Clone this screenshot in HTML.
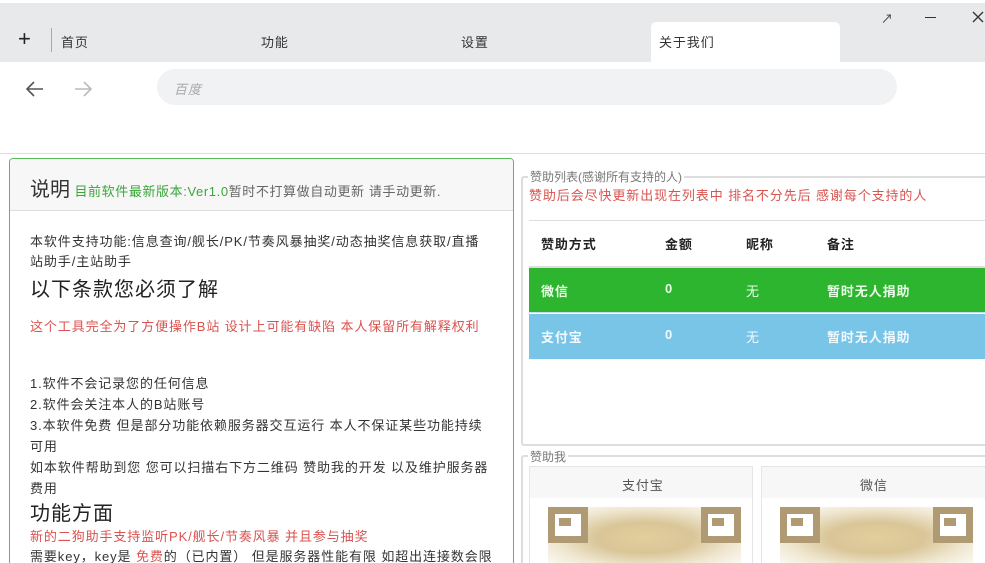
<!DOCTYPE html>
<html><head><meta charset="utf-8"><style>
*{margin:0;padding:0;box-sizing:border-box}
html{width:985px;height:563px;overflow:hidden}
body{width:985px;height:563px;overflow:hidden;background:#fff;font-family:"Liberation Sans","Noto Sans CJK SC",sans-serif;color:#333;position:relative}
.a{position:absolute;white-space:nowrap}
.f13{font-size:13px;letter-spacing:0.9px}
.fp{position:absolute;width:40px;height:36px;border:7px solid #b09a74;background:#fff}
.fp div{margin:4px;width:12px;height:8px;background:#b09a74}
.qr{position:absolute;width:193px;height:56px;background:radial-gradient(ellipse at 50% 55%,#e3cf9c 0%,#d9c597 35%,#efe6cf 65%,#fff 100%)}
</style></head><body>
<div class="a" style="left:0;top:3px;width:985px;height:59px;background:#e8e9eb"></div>
<div class="a" style="left:651px;top:22px;width:189px;height:41px;background:#fff;border-radius:5px 5px 0 0"></div>
<div class="a" style="left:18px;top:28px;font-size:22px;color:#222;line-height:22px">+</div>
<div class="a" style="left:51px;top:28px;width:1px;height:24px;background:#aaa"></div>
<div class="a f13" style="left:61px;top:32px;color:#333">首页</div>
<div class="a f13" style="left:261px;top:32px">功能</div>
<div class="a f13" style="left:461px;top:32px">设置</div>
<div class="a f13" style="left:659px;top:32px">关于我们</div>
<div class="a" style="left:881px;top:10px;font-size:12px;color:#333">↗</div>
<div class="a" style="left:925px;top:17px;width:11px;height:1px;background:#333"></div>
<svg class="a" style="left:972px;top:11px" width="12" height="12"><path d="M1 1L11 11M11 1L1 11" stroke="#333" stroke-width="1.3"/></svg>
<svg class="a" style="left:25px;top:80px" width="20" height="18"><path d="M18 9H3M9 2L2 9l7 7" stroke="#555" stroke-width="1.6" fill="none"/></svg>
<svg class="a" style="left:73px;top:80px" width="20" height="18"><path d="M2 9h15M11 2l7 7-7 7" stroke="#bbb" stroke-width="1.6" fill="none"/></svg>
<div class="a" style="left:157px;top:69px;width:740px;height:36px;background:#f1f2f4;border-radius:18px"></div>
<div class="a f13" style="left:174px;top:79px;color:#aaa;font-style:italic">百度</div>
<div class="a" style="left:0;top:153px;width:985px;height:1px;background:#ddd"></div>

<div class="a" style="left:9px;top:158px;width:505px;height:410px;border:1px solid #5cb85c;border-radius:4px;overflow:hidden">
<div style="height:52px;background:#f7f7f7;border-bottom:1px solid #ddd;padding:14px 0 0 20px;white-space:nowrap"><span style="font-size:20px;color:#333">说明</span> <span class="f13" style="color:#3aa63a;letter-spacing:0.6px">目前软件最新版本:Ver1.0</span><span class="f13" style="color:#666;letter-spacing:0.6px">暂时不打算做自动更新 请手动更新.</span></div>
</div>
<div class="a f13" style="left:30px;top:232px;line-height:20px">本软件支持功能:信息查询/舰长/PK/节奏风暴抽奖/动态抽奖信息获取/直播<br>站助手/主站助手</div>
<div class="a" style="left:30px;top:273px;font-size:20px;color:#222;letter-spacing:1px">以下条款您必须了解</div>
<div class="a f13" style="left:30px;top:316px;color:#d9534f">这个工具完全为了方便操作B站 设计上可能有缺陷 本人保留所有解释权利</div>
<div class="a f13" style="left:30px;top:373px;line-height:21px">1.软件不会记录您的任何信息<br>2.软件会关注本人的B站账号<br>3.本软件免费 但是部分功能依赖服务器交互运行 本人不保证某些功能持续<br>可用<br>如本软件帮助到您 您可以扫描右下方二维码 赞助我的开发 以及维护服务器<br>费用</div>
<div class="a" style="left:30px;top:497px;font-size:20px;color:#222;letter-spacing:1px">功能方面</div>
<div class="a f13" style="left:30px;top:526px;color:#d9534f">新的二狗助手支持监听PK/舰长/节奏风暴 并且参与抽奖</div>
<div class="a f13" style="left:30px;top:546px">需要key，key是 <span style="color:#d9534f">免费</span>的（已内置） 但是服务器性能有限 如超出连接数会限</div>

<div class="a" style="left:521px;top:176px;width:470px;height:270px;border:2px solid #ddd;border-radius:3px"></div>
<div class="a" style="left:528px;top:168px;background:#fff;font-size:12px;color:#777;padding:0 2px">赞助列表(感谢所有支持的人)</div>
<div class="a f13" style="left:529px;top:185px;color:#d9534f">赞助后会尽快更新出现在列表中 排名不分先后 感谢每个支持的人</div>
<div class="a" style="left:529px;top:220px;width:456px;height:1px;background:#ddd"></div>
<div class="a" style="left:529px;top:266px;width:456px;height:2px;background:#ddd"></div>
<div class="a f13" style="left:541px;top:234px;font-weight:bold;color:#222">赞助方式</div>
<div class="a f13" style="left:665px;top:234px;font-weight:bold;color:#222">金额</div>
<div class="a f13" style="left:746px;top:234px;font-weight:bold;color:#222">昵称</div>
<div class="a f13" style="left:827px;top:234px;font-weight:bold;color:#222">备注</div>
<div class="a" style="left:529px;top:268px;width:456px;height:45px;background:#2db52f;border-bottom:1px solid #cde"></div>
<div class="a" style="left:529px;top:314px;width:456px;height:45px;background:#79c5e8"></div>
<div class="a f13" style="left:541px;top:281px;color:#e8ffe8;font-weight:bold">微信</div>
<div class="a f13" style="left:665px;top:281px;color:#e8ffe8;font-weight:bold">0</div>
<div class="a f13" style="left:746px;top:281px;color:#e8ffe8">无</div>
<div class="a f13" style="left:827px;top:281px;color:#e8ffe8;font-weight:bold">暂时无人捐助</div>
<div class="a f13" style="left:541px;top:327px;color:#f0faff;font-weight:bold">支付宝</div>
<div class="a f13" style="left:665px;top:327px;color:#f0faff;font-weight:bold">0</div>
<div class="a f13" style="left:746px;top:327px;color:#f0faff">无</div>
<div class="a f13" style="left:827px;top:327px;color:#f0faff;font-weight:bold">暂时无人捐助</div>

<div class="a" style="left:521px;top:455px;width:470px;height:115px;border:2px solid #ddd;border-radius:3px"></div>
<div class="a" style="left:528px;top:448px;background:#fff;font-size:12px;color:#777;padding:0 2px">赞助我</div>

<div class="a" style="left:529px;top:466px;width:224px;height:104px;border:1px solid #e5e5e5;background:#fff"></div>
<div class="a" style="left:530px;top:467px;width:222px;height:31px;background:#f7f7f7"></div>
<div class="a f13" style="left:622px;top:475px;color:#555">支付宝</div>
<div class="a" style="left:761px;top:466px;width:230px;height:104px;border:1px solid #e5e5e5;background:#fff"></div>
<div class="a" style="left:762px;top:467px;width:228px;height:31px;background:#f7f7f7"></div>
<div class="a f13" style="left:860px;top:475px;color:#555">微信</div>

<div class="qr" style="left:548px;top:507px"></div>
<div class="fp" style="left:548px;top:507px"><div></div></div>
<div class="fp" style="left:701px;top:507px"><div></div></div>
<div class="qr" style="left:780px;top:507px"></div>
<div class="fp" style="left:780px;top:507px"><div></div></div>
<div class="fp" style="left:933px;top:507px"><div></div></div>
</body></html>
